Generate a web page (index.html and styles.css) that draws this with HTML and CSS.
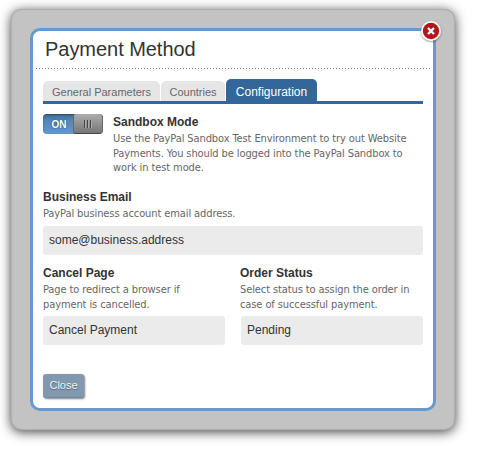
FILE: index.html
```html
<!DOCTYPE html>
<html lang="en">
<head>
<meta charset="utf-8">
<title>Payment Method</title>
<link rel="stylesheet" href="styles.css">
</head>
<body>
<div class="frame">
  <section class="dialog">
    <button class="dismiss" aria-label="Close dialog">
      <svg width="24" height="24" viewBox="0 0 24 24"><circle cx="12" cy="12" r="10" fill="#fff"/><circle cx="12" cy="12" r="8.2" fill="#b3151a"/><path d="M9 9l6 6M15 9l-6 6" stroke="#fff" stroke-width="2.3"/></svg>
    </button>
    <h1 class="title">Payment Method</h1>
    <div class="rule"></div>
    <div class="content">
      <nav class="tabs">
        <a class="tab tab-general">General Parameters</a>
        <a class="tab tab-countries">Countries</a>
        <a class="tab tab-active">Configuration</a>
      </nav>
      <div class="sandbox">
        <div class="switch"><span class="switch-on">ON</span><span class="knob"><i></i><i></i><i></i></span></div>
        <div>
          <h2 class="label">Sandbox Mode</h2>
          <p class="hint">Use the PayPal Sandbox Test Environment to try out Website<br>Payments. You should be logged into the PayPal Sandbox to<br>work in test mode.</p>
        </div>
      </div>
      <div class="field email">
        <h2 class="label">Business Email</h2>
        <p class="hint">PayPal business account email address.</p>
        <div class="input">some@business.address</div>
      </div>
      <div class="columns">
        <div class="field">
          <h2 class="label">Cancel Page</h2>
          <p class="hint">Page to redirect a browser if<br>payment is cancelled.</p>
          <div class="input">Cancel Payment</div>
        </div>
        <div class="field status">
          <h2 class="label">Order Status</h2>
          <p class="hint">Select status to assign the order in<br>case of successful payment.</p>
          <div class="input">Pending</div>
        </div>
      </div>
      <button class="close">Close</button>
    </div>
  </section>
</div>
</body>
</html>
```

FILE: styles.css
```css
* { box-sizing: border-box; }
body { margin: 0; padding: 9px 0 0 11px; height: 449px; background: #fff; overflow: hidden; font-family: "Liberation Sans", Arial, sans-serif; color: #333; }
h1, h2, p { margin: 0; }
.frame { width: 444px; height: 421px; padding: 19px; border-radius: 10px; background: #c3c3c3; box-shadow: 0 2px 12px rgba(0,0,0,.75), inset 0 0 2px rgba(0,0,0,.35); }
.dialog { position: relative; width: 406px; height: 383px; border: 3px solid #6699cf; border-radius: 10px; background: #fff; }
.dismiss { position: absolute; top: -12px; right: -10px; width: 24px; height: 24px; padding: 0; border: 0; background: none; filter: drop-shadow(0 1px 1px rgba(0,0,0,.4)); }
.dismiss svg { display: block; }
.title { height: 37px; padding-left: 12px; font-size: 20px; font-weight: normal; line-height: 37px; letter-spacing: -.04px; }
.rule { height: 1px; margin: 0 3px; background: repeating-linear-gradient(90deg, #777 0 1px, #fff 1px 3px); }
.content { padding: 10px 10px 0; }
.tabs { display: flex; align-items: flex-end; gap: 1px; height: 25px; border-bottom: 3px solid #336699; }
.tab { height: 20px; border-radius: 5px 5px 0 0; background: #e6e6e6; color: #666; font-size: 11px; line-height: 23px; text-align: center; white-space: nowrap; }
.tab-general { width: 117px; }
.tab-countries { width: 64px; }
.tab-active { width: 91px; height: 22px; background: #336699; color: #fff; font-size: 12px; line-height: 26px; }
.sandbox { display: flex; gap: 10px; height: 85px; padding-top: 10px; }
.switch { display: flex; flex: none; width: 60px; height: 20px; border-radius: 4px; overflow: hidden; background: linear-gradient(#406f9b, #5388b8 35%, #6299cd); box-shadow: inset 0 1px 2px rgba(0,0,0,.4); }
.switch-on { width: 30px; padding-left: 2px; color: #fff; font-size: 10px; font-weight: bold; line-height: 21px; text-align: center; text-shadow: 0 0 2px #245; }
.knob { display: flex; justify-content: center; align-items: center; gap: 2px; width: 30px; padding-right: 2px; border: 1px solid #686868; border-top-color: #aaa; border-bottom-color: #444; border-radius: 3px; background: linear-gradient(#aaa, #777); }
.knob i { width: 1px; height: 8px; background: #444; box-shadow: 1px 0 #aaa; }
.label { height: 17px; font-size: 12px; font-weight: bold; line-height: 16px; }
.hint { position: relative; top: 1px; color: #666; font-family: "DejaVu Sans Condensed", "DejaVu Sans", sans-serif; font-stretch: condensed; font-size: 11px; line-height: 14.5px; letter-spacing: -.1px; white-space: nowrap; }
.input { height: 29px; margin-top: 5px; padding-left: 6px; border-radius: 3px; background: #ebebeb; font-size: 12px; line-height: 28px; }
.email { height: 76px; }
.columns { display: grid; grid-template-columns: 182px 182px; gap: 16px; height: 109px; }
.status .label, .status .hint { margin-left: -1px; }
.close { display: block; width: 41px; height: 24px; padding: 0; border: 0; border-bottom: 1px solid #71889d; border-radius: 3px; background: #8298ae; color: #eef3f8; font: 11px/23px "Liberation Sans", Arial, sans-serif; text-shadow: 0 1px 1px #50677c; box-shadow: 1px 1px 2px rgba(0,0,0,.5); }
```
